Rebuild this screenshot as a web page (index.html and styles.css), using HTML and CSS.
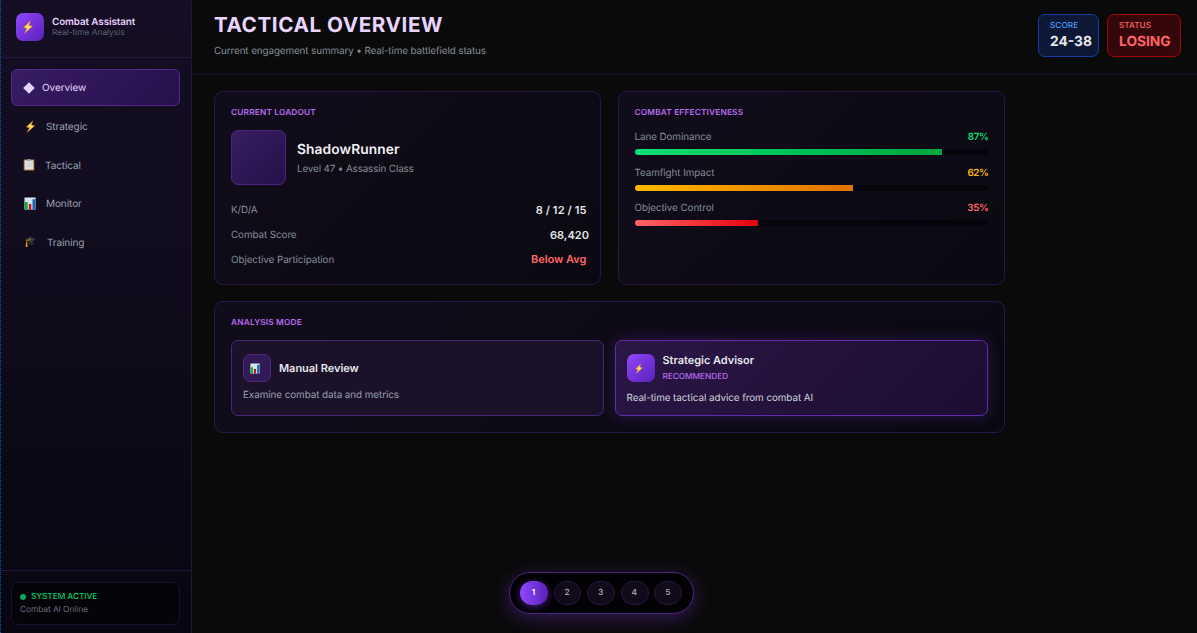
FILE: index.html
```html
<!DOCTYPE html>
<html lang="en">
<head>
<meta charset="utf-8">
<title>Tactical Overview</title>
<link rel="stylesheet" href="styles.css">
</head>
<body>
<svg class="defs" width="0" height="0" aria-hidden="true">
  <defs>
    <linearGradient id="gold" x1="0" y1="0" x2="1" y2="1"><stop offset="0" stop-color="#ff9800"/><stop offset=".5" stop-color="#ffe36a"/><stop offset="1" stop-color="#ffa000"/></linearGradient>
    <symbol id="bolt" viewBox="0 0 12 14"><path d="M8.6 .8 1.5 7.5l3.5 .9-2.6 5 8.1-7.2-3.8-.9z" fill="url(#gold)" stroke="#e58b13" stroke-width=".4"/></symbol>
    <symbol id="chart" viewBox="0 0 12 13"><path d="M.5 .5h11v12H.5z" fill="#dce8f3"/><path d="M.5 3.5h11M.5 6.5h11M.5 9.5h11" stroke="#b9cce0" stroke-width=".4"/><path d="M1 5h2.7v7.5H1z" fill="#08b623"/><path d="M4.8 7h2.5v5.5H4.8z" fill="#ca1025"/><path d="M8.5 2.2h2.7v10.3H8.5z" fill="#1767bd"/></symbol>
    <symbol id="clip" viewBox="0 0 12 13"><path d="M.7 1.5h10.6v11H.7z" fill="#ab7a3e"/><path d="M1.7 2.3h8.6v9.2H1.7z" fill="#e0e0df"/><path d="M3.8 2.9V1.5h1.3a1 1 0 0 1 1.8 0h1.3v1.4z" fill="#a5a7ab"/><path d="M3 5h6M3 6.8h6M3 8.6h5" stroke="#c5c5c5" stroke-width=".5"/></symbol>
    <symbol id="cap" viewBox="0 0 13 13"><path d="M4 5.5 10.5 7v3.3Q6.5 11.2 4 8.5z" fill="#252628"/><path d="M1 4.3 7.3 1l5.2 3.2-5 3.5z" fill="#383a3c"/><path d="M7.2 4.3 2.7 5.6v3" fill="none" stroke="#d98c1c" stroke-width=".9"/><path d="M2.1 8h1.5l.3 4.5H1.8z" fill="#e59a20"/></symbol>
  </defs>
</svg>
<div class="app">
  <aside class="sidebar">
    <div class="brand">
      <div class="brand-logo"><svg class="brand-bolt"><use href="#bolt"/></svg></div>
      <div>
        <div class="brand-name">Combat Assistant</div>
        <div class="brand-sub">Real-time Analysis</div>
      </div>
    </div>
    <nav class="nav">
      <a class="nav-item active"><svg class="diamond" viewBox="0 0 12 12"><path d="M6 .2 11.8 6 6 11.8 .2 6z" fill="#e9d4ff"/></svg><span>Overview</span></a>
      <a class="nav-item strategic"><svg><use href="#bolt"/></svg><span>Strategic</span></a>
      <a class="nav-item tactical"><svg><use href="#clip"/></svg><span>Tactical</span></a>
      <a class="nav-item monitor"><svg><use href="#chart"/></svg><span>Monitor</span></a>
      <a class="nav-item training"><svg><use href="#cap"/></svg><span>Training</span></a>
    </nav>
    <div class="side-foot">
      <div class="system">
        <div class="system-state"><i class="dot"></i><span>SYSTEM ACTIVE</span></div>
        <div class="system-sub">Combat AI Online</div>
      </div>
    </div>
  </aside>
  <main class="main">
    <header class="head">
      <div>
        <h1 class="title">TACTICAL OVERVIEW</h1>
        <p class="subtitle">Current engagement summary • Real-time battlefield status</p>
      </div>
      <div class="badges">
        <div class="badge score"><span class="badge-label">SCORE</span><b class="badge-value">24-38</b></div>
        <div class="badge status"><span class="badge-label">STATUS</span><b class="badge-value">LOSING</b></div>
      </div>
    </header>
    <div class="content">
      <section class="card loadout">
        <h2 class="card-title">CURRENT LOADOUT</h2>
        <div class="hero">
          <div class="avatar"></div>
          <div>
            <div class="hero-name">ShadowRunner</div>
            <div class="hero-sub">Level 47 • Assassin Class</div>
          </div>
        </div>
        <div class="stats">
          <div class="stat"><span>K/D/A</span><b class="kda">8 / 12 / 15</b></div>
          <div class="stat"><span>Combat Score</span><b class="points">68,420</b></div>
          <div class="stat"><span>Objective Participation</span><b class="below">Below Avg</b></div>
        </div>
      </section>
      <section class="card effect">
        <h2 class="card-title">COMBAT EFFECTIVENESS</h2>
        <div class="meter green"><div class="meter-row"><span>Lane Dominance</span><b>87%</b></div><div class="track"><div class="fill" style="width:87%"></div></div></div>
        <div class="meter amber"><div class="meter-row"><span>Teamfight Impact</span><b>62%</b></div><div class="track"><div class="fill" style="width:62%"></div></div></div>
        <div class="meter red"><div class="meter-row"><span>Objective Control</span><b>35%</b></div><div class="track"><div class="fill" style="width:35%"></div></div></div>
      </section>
      <section class="card analysis">
        <h2 class="card-title">ANALYSIS MODE</h2>
        <div class="modes">
          <div class="mode">
            <div class="mode-head"><div class="mode-icon"><svg><use href="#chart"/></svg></div><div class="mode-name manual">Manual Review</div></div>
            <p class="mode-text">Examine combat data and metrics</p>
          </div>
          <div class="mode chosen">
            <div class="mode-head"><div class="mode-icon"><svg><use href="#bolt"/></svg></div><div><div class="mode-name">Strategic Advisor</div><div class="mode-tag">RECOMMENDED</div></div></div>
            <p class="mode-text">Real-time tactical advice from combat AI</p>
          </div>
        </div>
      </section>
    </div>
  </main>
</div>
<div class="pager"><span class="page current">1</span><span class="page">2</span><span class="page">3</span><span class="page">4</span><span class="page">5</span></div>
</body>
</html>
```

FILE: styles.css
```css
* { box-sizing: border-box; }
body { margin: 0; background: #0a0a0a; color: #e5e7eb; font-family: Inter, sans-serif; text-rendering: geometricPrecision; overflow: hidden; }
h1, h2, p { margin: 0; }
.defs { position: absolute; }
.app { display: grid; grid-template-columns: 192px 1fr; height: 633px; }

.sidebar { display: flex; flex-direction: column; background: linear-gradient(180deg, #150e24, #110c1e 35%, #080711 95%); border-right: 1px solid #211834; border-left: 1px dotted #125b9c; }
.brand { display: flex; gap: 8px; height: 58px; padding: 13px 15px 0; border-bottom: 1px solid #24183d; }
.brand-logo { display: grid; place-items: center; width: 28px; height: 28px; border-radius: 7px; background: linear-gradient(135deg, #8e47ff, #5b20b6); }
.brand-bolt { width: 12px; height: 14px; margin-right: 4px; }
.brand-name { margin-top: 2px; font-size: 9.8px; line-height: 15px; font-weight: 600; color: #e9d4ff; letter-spacing: -.06px; }
.brand-sub { font-size: 8.4px; line-height: 7px; color: #596071; letter-spacing: -.04px; }
.nav { display: flex; flex-direction: column; gap: 1.5px; flex: 1; padding: 11px 11px 0 10px; }
.nav-item { display: flex; align-items: center; height: 37px; padding-left: 11px; border: 1px solid transparent; border-radius: 6px; font-size: 10px; letter-spacing: -.08px; color: #99a1af; }
.nav-item svg { width: 12px; height: 13px; }
.nav-item span { margin-left: 10px; padding-top: 1px; }
.nav-item.active { padding-left: 10.5px; color: #e9d4ff; background: linear-gradient(135deg, #371c62, #27104b); border-color: #52288d; }
.active .diamond { width: 12px; height: 12px; }
.active span { margin-left: 7.5px; }
.strategic { padding-left: 12px; }
.strategic svg { width: 13px; }
.strategic span { margin-left: 9px; }
.tactical span, .training span { padding-top: 2px; }
.monitor { padding-left: 12px; }
.training { padding-left: 12px; }
.training span { margin-left: 11px; }
.side-foot { height: 63px; padding: 11px 11px 0 10px; border-top: 1px solid #20123a; }
.system { height: 43px; padding: 6px 8px; background: #050409; border: 1px solid #1c102f; border-radius: 7px; }
.system-state { display: flex; align-items: center; gap: 5px; height: 14px; font-size: 8.4px; font-weight: 500; color: #05c969; letter-spacing: -.1px; }
.system-state span { padding-top: 1px; }
.dot { width: 6px; height: 6px; border-radius: 50%; background: #05a858; margin-top: 1px; }
.system-sub { font-size: 8.4px; line-height: 15px; color: #666d7a; letter-spacing: -.08px; }

.main { min-width: 0; }
.head { display: flex; justify-content: space-between; height: 75px; padding: 12px 16px 0 22px; border-bottom: 2px solid #120f1b; }
.title { font-size: 20.7px; line-height: 25px; font-weight: 700; color: #e9d4ff; letter-spacing: .54px; }
.subtitle { margin-top: 7px; font-size: 9.85px; line-height: 15px; color: #858c99; letter-spacing: -.1px; }
.badges { display: flex; gap: 8px; padding-top: 2px; }
.badge { height: 43px; padding: 4px 0 0 11px; border: 1px solid; border-radius: 7px; }
.score { width: 61px; background: #0d1736; border-color: #173aa4; color: #4b9df8; }
.status { width: 74px; background: #35070a; border-color: #9b090e; color: #ff6467; }
.badge-label { display: block; font-size: 8.25px; line-height: 12px; font-weight: 500; letter-spacing: .02px; }
.badge-value { display: block; font-size: 13.75px; line-height: 22px; }
.score .badge-value { color: #e5e7eb; }

.content { display: grid; grid-template-columns: 387px 387px; grid-template-rows: 194px 132px; gap: 16px 16.5px; padding: 16px 22px; }
.card { padding: 16px; background: linear-gradient(135deg, #110c1a, #0a0911); border: 1px solid #29174a; border-radius: 9px; }
.card-title { height: 11px; font-size: 8.3px; line-height: 11.5px; font-weight: 600; color: #b56bef; letter-spacing: .17px; }
.hero { display: flex; align-items: center; gap: 11px; margin-top: 11px; }
.avatar { width: 55px; height: 55px; background: linear-gradient(135deg, #371e60, #27104a); border: 1px solid #4c247f; border-radius: 7px; }
.hero-name { padding-top: 1px; font-size: 13.75px; line-height: 20px; font-weight: 600; color: #f0f1f4; letter-spacing: .1px; }
.hero-sub { margin-top: 2px; padding-bottom: 1px; font-size: 9.85px; line-height: 14px; color: #858c99; letter-spacing: -.13px; }
.stats { margin-top: 12.6px; }
.stat { display: flex; justify-content: space-between; align-items: center; height: 24.7px; font-size: 9.85px; color: #858c99; letter-spacing: -.08px; }
.stat span { padding-top: 1px; }
.stat b { margin-right: -2.5px; font-size: 11px; font-weight: 600; color: #e5e7eb; letter-spacing: .05px; }
.stat .kda { letter-spacing: .12px; }
.stat .points { margin-right: -5px; }
.stat .below { color: #ff6467; letter-spacing: 0; }

.meter-row { display: flex; justify-content: space-between; height: 15px; margin: -4px -1px 0 0; font-size: 9.85px; line-height: 15px; color: #858c99; letter-spacing: -.08px; }
.meter-row b { font-weight: 600; letter-spacing: -.4px; }
.effect .card-title + .meter { margin-top: 15px; }
.meter + .meter { margin-top: 14.6px; }
.track { height: 6px; margin-top: 4px; overflow: hidden; border-radius: 3px; background: #060509; }
.fill { height: 6px; }
.green .fill { background: linear-gradient(90deg, #05df72, #00a63e); }
.green b { color: #05df72; }
.amber .fill { background: linear-gradient(90deg, #ffb900, #e17100); }
.amber b { color: #ffb900; }
.red .fill { background: linear-gradient(90deg, #ff6467, #e7000b); }
.red b { color: #ff6467; }

.analysis { grid-column: 1 / 3; }
.modes { display: grid; grid-template-columns: 373px 373px; gap: 10.5px; margin-top: 11px; }
.mode { height: 76px; padding: 13px 11px 0; background: #1b1129; border: 1px solid #47267a; border-radius: 7px; }
.chosen { background: linear-gradient(135deg, #2b1646, #1c0d31); border-color: #602da8; box-shadow: 0 0 15px #5b2aa066; }
.mode-head { display: flex; align-items: center; gap: 8px; height: 28px; }
.mode-icon { display: grid; place-items: center; width: 28px; height: 28px; background: #311a55; border: 1px solid #4f2884; border-radius: 7px; }
.mode-icon svg { width: 10px; height: 11px; margin-right: 4px; }
.chosen .mode-icon { background: linear-gradient(135deg, #8e47ff, #5b20b6); border: 0; }
.mode-name { font-size: 11px; line-height: 15px; font-weight: 600; color: #e5e7eb; letter-spacing: -.03px; }
.mode-tag { margin-top: 2px; font-size: 8.3px; line-height: 15px; font-weight: 500; color: #b56bef; letter-spacing: -.06px; }
.chosen .mode-name { padding-top: 1px; }
.mode-text { margin-top: 6px; font-size: 9.85px; line-height: 15px; color: #99a1af; letter-spacing: -.06px; }
.chosen .mode-text { margin-top: 9px; color: #d1d5dc; }

.pager { position: absolute; left: 509px; top: 572px; display: flex; gap: 5.8px; width: 185px; height: 42px; padding: 8px 10px; background: #020103; border: 1px solid #4b2480; border-radius: 21px; box-shadow: 0 4px 18px #5b2aa080; }
.page { display: grid; place-items: center; width: 27.8px; height: 24px; padding-right: 1px; border: 1px solid #27163f; border-radius: 12px; background: #110a1b; color: #99a1af; font-size: 8.4px; font-weight: 600; }
.current { border: 0; background: linear-gradient(90deg, #8e47ff, #5b20b6); color: #fff; box-shadow: 0 2px 9px #6b32bb99; }
```
